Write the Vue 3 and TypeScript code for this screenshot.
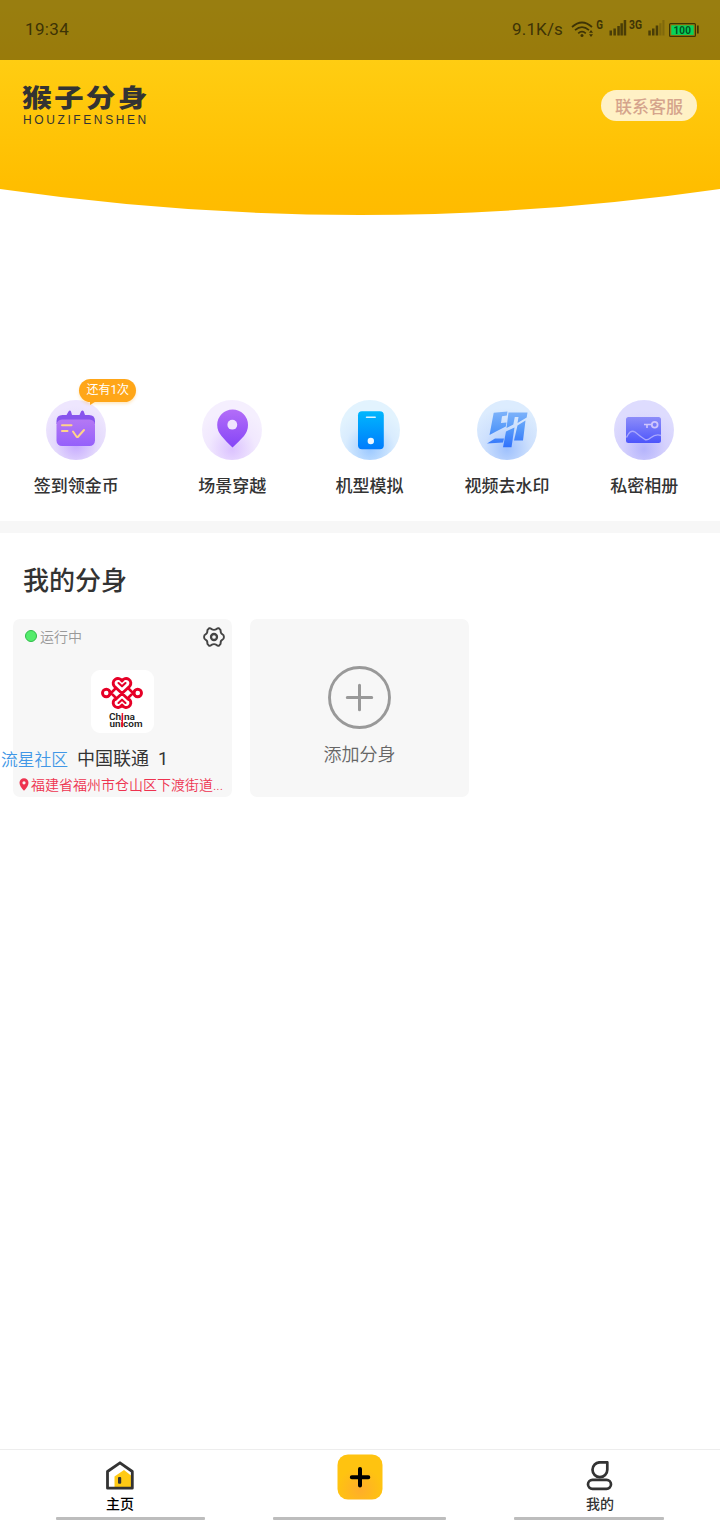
<script setup lang="ts">
interface Feature {
  id: string
  label: string
  badge?: string
}

const features: Feature[] = [
  { id: 'checkin', label: '签到领金币', badge: '还有1次' },
  { id: 'travel', label: '场景穿越' },
  { id: 'device', label: '机型模拟' },
  { id: 'watermark', label: '视频去水印' },
  { id: 'album', label: '私密相册' },
]
</script>

<template>
  <div class="screen">
    <header class="hero">
      <svg class="hero-bg" width="720" height="216" viewBox="0 0 720 216">
        <defs>
          <linearGradient id="heroFill" x1="0" y1="0" x2="0" y2="1">
            <stop offset="0" stop-color="#ffd31c" />
            <stop offset=".28" stop-color="#ffcd12" />
            <stop offset=".85" stop-color="#ffbe00" />
            <stop offset="1" stop-color="#ffbb00" />
          </linearGradient>
        </defs>
        <path d="M0 0H720V189Q540 215 360 215T0 189Z" fill="url(#heroFill)" />
      </svg>
      <div class="status">
        <span class="clock">19:34</span>
        <span class="speed">9.1K/s</span>
        <svg class="signals" width="130" height="24" viewBox="570 16 130 24">
          <g fill="none" stroke="#3d3306" stroke-width="1.700">
            <path d="M572 26Q582 17 592 26M575 29.200Q582 23 589 29.200M578.200 32.300Q582 29 585.800 32.300" />
          </g>
          <circle cx="582" cy="34.400" r="1.500" fill="#3d3306" />
          <path d="M589 31.800l2-2.800 2 2.800zM589 33.200l2 2.800 2-2.800z" fill="#3d3306" />
          <text x="596.300" y="28" textLength="6.700" lengthAdjust="spacingAndGlyphs" class="net">G</text>
          <g fill="#4a3d07">
            <path d="M609.500 29.500h2.500v5h-2.500zM613.400 27.500h2.500v7h-2.500zM617.300 25h2.500v9.500h-2.500zM620.400 22.300h2.500v12.200h-2.500zM623.700 19h2.500v15.500h-2.500z" />
            <path d="M648.300 29.500h2.500v5h-2.500zM652 27.500h2.500v7h-2.500zM655.700 24.500h2.500v10h-2.500z" />
            <path opacity=".3" d="M659.200 22.300h2.300v12.200h-2.300zM662.400 19h2.100v15.500h-2.100z" />
          </g>
          <text x="629" y="28" textLength="13" lengthAdjust="spacingAndGlyphs" class="net">3G</text>
          <rect x="669.600" y="22.600" width="25.800" height="12.800" rx="1" fill="#9a7d0d" stroke="#3d3306" stroke-width="1.200" />
          <rect x="671.300" y="24.300" width="22.400" height="9.600" fill="#06d35b" />
          <rect x="697" y="24.500" width="1.700" height="8" fill="#3d3306" />
          <text x="673.400" y="33" textLength="17.500" class="level">100</text>
        </svg>
      </div>
      <div class="brand-row">
        <div class="brand">
          <div class="brand-cn">猴子分身</div>
          <div class="brand-en">HOUZIFENSHEN</div>
        </div>
        <button class="service">联系客服</button>
      </div>
    </header>

    <section class="features">
      <div v-for="f in features" :key="f.id" class="feature" :class="f.id">
        <div class="feature-icon">
          <svg v-if="f.id === 'checkin'" width="60" height="60" viewBox="0 0 60 60">
            <defs>
              <radialGradient id="c0" cx=".5" cy=".75" r=".65"><stop offset="0" stop-color="#c6aaff" /><stop offset=".55" stop-color="#e4dafc" /><stop offset="1" stop-color="#eee6fe" /></radialGradient>
              <linearGradient id="c1" x1="0" y1="0" x2="0" y2="1"><stop offset="0" stop-color="#b478f4" /><stop offset="1" stop-color="#9560fb" /></linearGradient>
            </defs>
            <circle cx="30" cy="30" r="30" fill="url(#c0)" />
            <path d="M10.500 24v-3q0-6 6-6H20.500L22.500 11.500Q24 9.500 25 11.500L26 15H33.500L35 11.500Q36.500 9.500 37.800 11.500L39 15H43q6 0 6 6v3z" fill="#8754ed" />
            <rect x="10.500" y="19.500" width="38.500" height="26.500" rx="5.500" fill="url(#c1)" />
            <path d="M16 25.200h9.500M16 31h5.500M27 31.500l3.800 5.500h1l6.200-7" fill="none" stroke="#ffd38a" stroke-width="2" stroke-linecap="round" stroke-linejoin="round" />
          </svg>
          <svg v-else-if="f.id === 'travel'" width="60" height="60" viewBox="0 0 60 60">
            <defs>
              <radialGradient id="t0" cx=".5" cy=".82" r=".65"><stop offset="0" stop-color="#dbc2ff" /><stop offset=".6" stop-color="#f1e8fe" /><stop offset="1" stop-color="#f5effe" /></radialGradient>
              <linearGradient id="t1" x1="0" y1="0" x2="0" y2="1"><stop offset="0" stop-color="#b36df8" /><stop offset="1" stop-color="#8545f7" /></linearGradient>
            </defs>
            <circle cx="30" cy="30" r="30" fill="url(#t0)" />
            <path d="M30.500 47.500Q24 41.500 19.500 36Q15.200 31 15.200 25A15.400 15.400 0 0 1 46 25Q46 31 42 36Q37 41.500 30.500 47.500Z" fill="url(#t1)" />
            <circle cx="30.300" cy="24.700" r="4.900" fill="#f0e4fe" />
          </svg>
          <svg v-else-if="f.id === 'device'" width="60" height="60" viewBox="0 0 60 60">
            <defs>
              <radialGradient id="d0" cx=".5" cy=".82" r=".65"><stop offset="0" stop-color="#9cc9ff" /><stop offset=".65" stop-color="#d9ecfe" /><stop offset="1" stop-color="#e2f3fe" /></radialGradient>
              <linearGradient id="d1" x1="0" y1="0" x2="0" y2="1"><stop offset="0" stop-color="#00b7fd" /><stop offset="1" stop-color="#007cfc" /></linearGradient>
            </defs>
            <circle cx="30" cy="30" r="30" fill="url(#d0)" />
            <rect x="18" y="11.200" width="25.800" height="38" rx="4" fill="url(#d1)" />
            <path d="M26.500 17.300h8.700" stroke="#d9f3ff" stroke-width="1.500" stroke-linecap="round" />
            <circle cx="30.800" cy="41" r="3.200" fill="#eef7ff" />
          </svg>
          <svg v-else-if="f.id === 'watermark'" width="60" height="60" viewBox="0 0 60 60">
            <defs>
              <radialGradient id="w0" cx=".5" cy=".82" r=".7"><stop offset="0" stop-color="#9fc1fd" /><stop offset=".55" stop-color="#cde0fd" /><stop offset="1" stop-color="#dcecfe" /></radialGradient>
              <linearGradient id="w1" gradientUnits="userSpaceOnUse" x1="0" y1="11" x2="0" y2="48"><stop offset="0" stop-color="#7fb4fa" /><stop offset=".5" stop-color="#5599f9" /><stop offset="1" stop-color="#2f70fc" /></linearGradient>
            </defs>
            <circle cx="30" cy="30" r="30" fill="url(#w0)" />
            <g fill="url(#w1)">
              <path d="M16.700 12.800L30.500 11.500 29.800 15.500 25 16.300 24 23 29.500 22.500 28.800 26.500 20 31 12.500 35Z" />
              <path d="M31.500 12.500H50.500L49.700 17.500 40.500 23 41.500 17H37.800L36.300 24.500 29.500 28Z" />
              <path d="M10 43.500L18 38.500H27L26 42.500Z" />
              <path d="M29 31.500L37.500 27.500 34.500 47.300H26Z" />
              <path d="M40.500 25.500L48.500 20.500 46 40.500H37Z" />
            </g>
          </svg>
          <svg v-else width="60" height="60" viewBox="0 0 60 60">
            <defs>
              <radialGradient id="a0" cx=".5" cy=".82" r=".65"><stop offset="0" stop-color="#b5b4fc" /><stop offset=".55" stop-color="#d5d1fd" /><stop offset="1" stop-color="#dedcfe" /></radialGradient>
              <linearGradient id="a1" x1="0" y1="0" x2="0" y2="1"><stop offset="0" stop-color="#8d8df9" /><stop offset="1" stop-color="#4c55fb" /></linearGradient>
            </defs>
            <circle cx="30" cy="30" r="30" fill="url(#a0)" />
            <rect x="12" y="17" width="35" height="26" rx="2.500" fill="url(#a1)" />
            <path d="M12.500 37.500Q16 29 21 32Q27 37 31 39.500C36 42 38 32 47 35.500" fill="none" stroke="#a9a7fd" stroke-width="1.400" />
            <circle cx="40.700" cy="24.700" r="2.900" fill="none" stroke="#cfc5fc" stroke-width="1.800" />
            <path d="M30 24.500h7.800M33 24.500v3.500" stroke="#cfc5fc" stroke-width="1.600" />
          </svg>
          <span v-if="f.badge" class="badge">{{ f.badge }}</span>
        </div>
        <div class="feature-label">{{ f.label }}</div>
      </div>
    </section>

    <div class="divider"></div>

    <main class="clones">
      <h2>我的分身</h2>
      <div class="cards">
        <article class="card app-card">
          <div class="card-top">
            <i class="dot"></i>
            <span class="running">运行中</span>
            <svg class="gear" width="22" height="20" viewBox="0 0 22 20" fill="none" stroke="#444">
              <path d="M6.200 1.200Q7.500 1 8.500 2.200Q11 3.600 13.500 2.200Q14.500 1 15.800 1.200L17.600 3.200Q17.400 6.500 19.500 7.300Q21 8 20.900 10Q21 12 19.500 12.700Q17.400 13.500 17.600 16.800L15.800 18.800Q14.500 19 13.500 17.800Q11 16.400 8.500 17.800Q7.500 19 6.200 18.800L4.400 16.800Q4.600 13.500 2.500 12.700Q1 12 1.100 10Q1 8 2.500 7.300Q4.600 6.500 4.400 3.200Z" stroke-width="1.900" stroke-linejoin="round" />
              <circle cx="11" cy="10" r="3" stroke-width="2.300" />
            </svg>
          </div>
          <div class="app-logo">
            <svg width="63" height="63" viewBox="0 0 63 63">
              <g fill="none" stroke="#e60027" stroke-width="2.900" stroke-linejoin="round" stroke-linecap="round">
                <path d="M37.500 29.500L23.300 16.300A4.700 4.700 0 1 1 31 11A4.700 4.700 0 1 1 38.700 16.300L24.500 29.500" />
                <path d="M38.700 29.700A4.700 4.700 0 1 1 31 35A4.700 4.700 0 1 1 23.300 29.700" />
                <path d="M27.500 13L31 16.300L34.500 13M27.500 33L31 29.700L34.500 33" stroke-width="2.100" />
                <circle cx="15.300" cy="23" r="3.800" />
                <circle cx="46.700" cy="23" r="3.800" />
                <path d="M18.500 24.500L25 18M18.500 21.500L25 28M43.500 24.500L37 18M43.500 21.500L37 28" stroke-width="2.500" />
              </g>
              <text x="18" y="49.700" textLength="26" lengthAdjust="spacingAndGlyphs" class="uni">Ch<tspan fill="#e60027">i</tspan>na</text>
              <text x="18.500" y="57.300" textLength="33" lengthAdjust="spacingAndGlyphs" class="uni">un<tspan fill="#e60027">i</tspan>com</text>
              <path d="M31.300 43.500v13.800" stroke="#e60027" stroke-width="1.200" />
            </svg>
          </div>
          <div class="app-name">中国联通&nbsp; 1</div>
          <div class="location">
            <svg width="10" height="13" viewBox="0 0 10 13"><path fill-rule="evenodd" d="M5 12.800Q.5 8 .5 4.700A4.500 4.500 0 0 1 9.500 4.700Q9.500 8 5 12.800ZM5 3.200a1.600 1.600 0 1 0 0 3.200a1.600 1.600 0 1 0 0-3.200Z" fill="#ee3350" /></svg>
            <span>福建省福州市仓山区下渡街道...</span>
          </div>
          <span class="community">流星社区</span>
        </article>
        <article class="card add-card">
          <svg width="63" height="63" viewBox="0 0 63 63" fill="none" stroke="#999">
            <circle cx="31.500" cy="31.500" r="30" stroke-width="2.900" />
            <path d="M31.500 19.300v24.400M19.300 31.500h24.400" stroke-width="3" stroke-linecap="round" />
          </svg>
          <span>添加分身</span>
        </article>
      </div>
    </main>

    <nav class="tabs">
      <a class="tab active">
        <svg width="30" height="30" viewBox="0 0 30 30">
          <path d="M9.500 26.500V15.500L19 9 26 14.500V26.500Z" fill="#ffca14" />
          <path d="M2.500 27.200V10.500L15 1.800 27.300 10.500V27.200Z" fill="none" stroke="#333" stroke-width="2.800" stroke-linejoin="round" />
          <rect x="13" y="16" width="3.200" height="6.800" rx="1" fill="#333" />
        </svg>
        <span>主页</span>
        <i class="bar"></i>
      </a>
      <a class="tab plus">
        <svg width="47" height="46" viewBox="0 0 47 46">
          <defs><radialGradient id="pl" cx=".5" cy=".78" r=".5"><stop offset="0" stop-color="#ffad2b" /><stop offset="1" stop-color="#ffc310" /></radialGradient></defs>
          <rect x=".5" y=".5" width="45" height="45" rx="10.500" fill="url(#pl)" />
          <path d="M23 15v16.500M14.800 23.200h16.500" stroke="#000" stroke-width="4" stroke-linecap="round" />
        </svg>
        <i class="bar"></i>
      </a>
      <a class="tab">
        <svg width="30" height="30" viewBox="0 0 30 30" fill="none" stroke="#333" stroke-width="2.700">
          <path d="M22.300 1.300V8.700A7.400 7.400 0 1 1 14.900 1.300Z" stroke-linejoin="round" />
          <rect x="3" y="18.800" width="23" height="9" rx="4.500" />
        </svg>
        <span>我的</span>
        <i class="bar"></i>
      </a>
    </nav>
  </div>
</template>

<style>
body { background: #fff; }
</style>

<style scoped>
.screen {
  width: 720px;
  height: 1520px;
  display: flex;
  flex-direction: column;
  background: #fff;
  color: #333;
  font-family: Roboto, "Noto Sans CJK SC", sans-serif;
  overflow: hidden;
}
svg { display: block; flex: none; }
.hero { position: relative; height: 369px; flex: none; }
.hero-bg { position: absolute; top: 0; left: 0; }
.status {
  position: relative;
  height: 60px;
  box-sizing: border-box;
  padding: 0 20px 2px 25px;
  display: flex;
  align-items: center;
  background: rgba(0, 0, 0, .4);
  color: #3d3306;
  font-size: 17px;
  letter-spacing: .35px;
}
.speed { margin-left: auto; margin-right: 7px; letter-spacing: .15px; }
.signals { letter-spacing: 0; }
.net { font: 700 12px Roboto, sans-serif; fill: #3d3306; }
.level { font: 700 10px Roboto, sans-serif; fill: #075020; }
.brand-row {
  position: relative;
  display: flex;
  justify-content: space-between;
  padding: 22px 23px 0 22px;
}
.brand-cn {
  width: 116px;
  height: 32px;
  font: 900 27px/32px "Noto Sans CJK SC", sans-serif;
  letter-spacing: 2px;
  transform: translateY(-1px) scale(1.1, .94);
  transform-origin: left;
  white-space: nowrap;
}
.brand-en { font: 12px/12px "Liberation Sans", sans-serif; letter-spacing: 2.600px; padding-left: 1px; width: 130px; }
.service {
  margin-top: 8px;
  width: 96px;
  height: 31px;
  padding: 0;
  border: 0;
  border-radius: 16px;
  background: #fff1c5;
  color: #d5a48c;
  font: 500 17px/30px "Noto Sans CJK SC", sans-serif;
}
.features {
  height: 152px;
  flex: none;
  box-sizing: border-box;
  padding: 31px 7px 0 0;
  display: grid;
  grid-template-columns: 163.500px repeat(4, 1fr);
}
.feature { display: flex; flex-direction: column; align-items: center; }
.checkin { padding-right: 11px; }
.feature-icon { position: relative; width: 60px; height: 60px; }
.feature-label { margin-top: 14px; font-size: 17px; line-height: 24px; font-weight: 500; white-space: nowrap; }
.badge {
  position: absolute;
  left: 33px;
  top: -21px;
  width: 57px;
  height: 23px;
  border-radius: 12px;
  background: #ffa618;
  color: #fff;
  font-size: 12px;
  line-height: 23px;
  text-align: center;
  white-space: nowrap;
  box-shadow: 0 2px 3px rgba(255, 166, 24, .25);
}
.badge::after {
  content: "";
  position: absolute;
  left: 11px;
  bottom: -3px;
  border-top: 5px solid #ffa618;
  border-right: 8px solid transparent;
}
.divider { height: 12px; flex: none; background: #f7f7f7; }
.clones { flex: 1; }
h2 { margin: 0; padding: 28px 0 0 23px; height: 58px; font-size: 26px; line-height: 40px; font-weight: 500; }
.cards { display: flex; gap: 18px; padding-left: 13px; }
.card { position: relative; width: 219px; height: 178px; border-radius: 7px; background: #f7f7f7; display: flex; flex-direction: column; align-items: center; }
.card-top { box-sizing: border-box; width: 100%; height: 36px; padding: 0 7px 0 12px; display: flex; align-items: center; }
.dot { width: 10px; height: 10px; border: 1px solid #2fbc49; border-radius: 50%; background: #54ec6c; margin-bottom: 2px; }
.running { margin-left: 3px; margin-bottom: 1px; color: #999; font-size: 14px; font-weight: 350; }
.gear { margin-left: auto; }
.app-logo { margin-top: 15px; width: 63px; height: 63px; border-radius: 9px; background: #fff; }
.uni { font: 600 8.500px Roboto, sans-serif; fill: #222; }
.app-logo { position: relative; top: 1px; }
.app-name { width: 100%; box-sizing: border-box; margin-top: 13px; padding-left: 64px; font-size: 18px; line-height: 28px; font-weight: 400; }
.location { width: 100%; box-sizing: border-box; display: flex; align-items: center; padding-left: 6px; gap: 2px; color: #ee3350; font-size: 14px; line-height: 24px; font-weight: 350; white-space: nowrap; }
.location svg { margin-bottom: 2px; }
.community { position: absolute; left: -12px; top: 130px; color: #4197e6; font-size: 16.800px; line-height: 22px; font-weight: 350; white-space: nowrap; }
.add-card svg { margin: 47px 0 13px; }
.add-card span { color: #666; font-size: 18px; line-height: 26px; font-weight: 350; }
.tabs { height: 71px; flex: none; box-sizing: border-box; border-top: 1px solid #ededed; display: grid; grid-template-columns: repeat(3, 1fr); }
.tab { position: relative; display: flex; flex-direction: column; align-items: center; padding-top: 11px; color: #333; font-size: 14px; line-height: 20px; font-weight: 500; }
.tab span { margin-top: 3px; }
.active { color: #000; }
.plus { padding-top: 4px; }
.bar { position: absolute; bottom: 0; left: 50%; width: 149px; height: 3px; margin-left: -64px; border-radius: 1px; background: #bdbdbd; }
.plus .bar { width: 173px; margin-left: -87px; }
.tab:last-child .bar { width: 150px; margin-left: -86px; }
</style>
